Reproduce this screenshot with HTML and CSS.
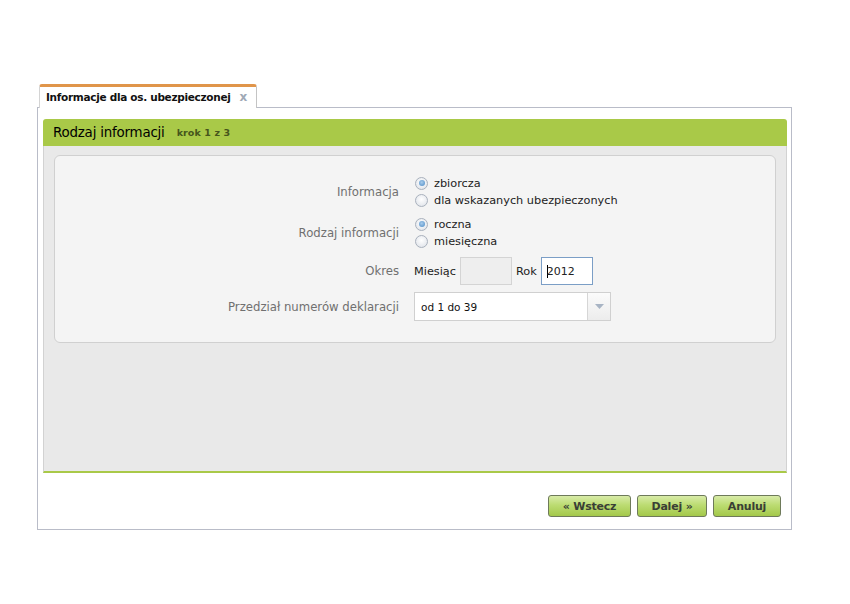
FILE: index.html
```html
<!DOCTYPE html>
<html lang="pl">
<head>
<meta charset="utf-8">
<title>Informacje dla os. ubezpieczonej</title>
<link rel="stylesheet" href="styles.css">
</head>
<body>
<div class="window">
  <div class="tabs">
    <div class="tab"><span class="tab-title">Informacje dla os. ubezpieczonej</span><span class="tab-close">x</span></div>
  </div>
  <div class="panel">
    <div class="section">
      <div class="section-head"><span class="section-title">Rodzaj informacji</span><span class="section-step">krok 1 z 3</span></div>
      <div class="section-body">
        <div class="form">
          <div class="row row-radio">
            <div class="label">Informacja</div>
            <div class="controls">
              <div class="radio-line"><span class="radio checked"></span><span>zbiorcza</span></div>
              <div class="radio-line"><span class="radio"></span><span>dla wskazanych ubezpieczonych</span></div>
            </div>
          </div>
          <div class="row row-radio">
            <div class="label">Rodzaj informacji</div>
            <div class="controls">
              <div class="radio-line"><span class="radio checked"></span><span>roczna</span></div>
              <div class="radio-line"><span class="radio"></span><span>miesięczna</span></div>
            </div>
          </div>
          <div class="row row-okres">
            <div class="label">Okres</div>
            <div class="controls inline">
              <span class="field-text">Miesiąc</span>
              <span class="input disabled"></span>
              <span class="field-text">Rok</span>
              <span class="input active"><span class="caret"></span>2012</span>
            </div>
          </div>
          <div class="row row-select">
            <div class="label">Przedział numerów deklaracji</div>
            <div class="controls">
              <div class="select"><span class="select-value">od 1 do 39</span><span class="select-btn"><svg width="9" height="5" viewBox="0 0 9 5"><path d="M0 0h9L4.5 5z" fill="#a8b4c4"/></svg></span></div>
            </div>
          </div>
        </div>
      </div>
    </div>
    <div class="buttons">
      <button class="btn btn-back">« Wstecz</button>
      <button class="btn btn-next">Dalej »</button>
      <button class="btn btn-cancel">Anuluj</button>
    </div>
  </div>
</div>
</body>
</html>
```

FILE: styles.css
```css
html, body {
  margin: 0;
  padding: 0;
  background: #ffffff;
}
body {
  font-family: "DejaVu Sans", Verdana, sans-serif;
  font-size: 11px;
  color: #222;
}
.window {
  margin: 84px 0 0 37px;
  width: 755px;
}
.tabs {
  display: flex;
  height: 23px;
  padding-left: 2px;
}
.tab {
  position: relative;
  z-index: 1;
  box-sizing: border-box;
  width: 218px;
  height: 24px;
  border-top: 3px solid #e0954a;
  border-left: 1px solid #d4d4d4;
  border-right: 1px solid #c4c4c4;
  background: #fff;
  border-radius: 3px 3px 0 0;
  display: flex;
  align-items: center;
  padding: 0 0 2px 6px;
}
.tab-title {
  font-weight: bold;
  font-size: 10.5px;
  letter-spacing: -0.3px;
  color: #111;
}
.tab-close {
  margin-left: 9px;
  font-weight: bold;
  font-size: 12px;
  color: #a0a9b6;
}
.panel {
  box-sizing: border-box;
  height: 423px;
  border: 1px solid #b9bcc8;
  padding: 11px 4px 0 5px;
}
.section-head {
  height: 27px;
  background: #a9c948;
  border-radius: 3px 3px 0 0;
  display: flex;
  align-items: center;
  padding-left: 10px;
}
.section-title {
  font-size: 13.4px;
  letter-spacing: -0.2px;
  color: #000;
}
.section-step {
  margin-left: 12px;
  font-size: 9.5px;
  font-weight: bold;
  color: #46551c;
  letter-spacing: 0.1px;
}
.section-body {
  box-sizing: border-box;
  height: 327px;
  background: #e9e9e9;
  border-left: 1px solid #d2d2d2;
  border-right: 1px solid #d2d2d2;
  border-bottom: 2px solid #a9c948;
  padding: 9px 10px 0 10px;
}
.form {
  box-sizing: border-box;
  height: 188px;
  background: #f4f4f4;
  border: 1px solid #d0d0d0;
  border-radius: 6px;
  padding-top: 18px;
}
.row {
  display: flex;
  align-items: center;
}
.label {
  width: 344px;
  text-align: right;
  color: #707070;
  font-size: 11.7px;
}
.controls {
  margin-left: 16px;
  color: #222;
  font-size: 11.3px;
}
.row-radio {
  height: 35px;
  margin-bottom: 6px;
}
.row-radio + .row-radio {
  margin-bottom: 0;
}
.radio-line {
  display: flex;
  align-items: center;
  height: 17px;
}
.radio-line span:last-child {
  margin-left: 6px;
}
.radio {
  box-sizing: border-box;
  width: 13px;
  height: 13px;
  border-radius: 50%;
  border: 1px solid #a9b1bd;
  background: radial-gradient(circle at 50% 40%, #ffffff 0%, #e6e9ee 70%, #d6dbe2 100%);
  display: inline-block;
  position: relative;
}
.radio.checked::after {
  content: "";
  position: absolute;
  left: 2.5px;
  top: 2.5px;
  width: 6px;
  height: 6px;
  border-radius: 50%;
  background: radial-gradient(circle at 45% 40%, #a8ccec 0%, #5d97cc 80%);
}
.row-okres {
  height: 28px;
  margin-top: 7px;
}
.inline {
  display: flex;
  align-items: center;
  margin-left: 15px;
}
.field-text {
  color: #222;
}
.input {
  box-sizing: border-box;
  display: inline-flex;
  align-items: center;
  width: 52px;
  height: 28px;
  margin: 0 4px;
  font-size: 11px;
}
.input.disabled {
  background: #eeeeee;
  border: 1px solid #d4d4d4;
}
.input.active {
  background: #fff;
  border: 1px solid #7b9ec6;
  padding-left: 5px;
}
.caret {
  display: inline-block;
  width: 1px;
  height: 13px;
  background: #000;
  margin-right: -1px;
}
.row-select {
  height: 29px;
  margin-top: 7px;
}
.select {
  box-sizing: border-box;
  display: flex;
  width: 197px;
  height: 29px;
  margin-left: -1px;
  background: #fff;
  border: 1px solid #d0d0d0;
}
.select-value {
  flex: 1;
  display: flex;
  align-items: center;
  padding-left: 6px;
  font-size: 10.5px;
  color: #111;
}
.select-btn {
  width: 22px;
  border-left: 1px solid #d6d6d6;
  background: linear-gradient(#fbfbfb, #ececec);
  display: flex;
  align-items: center;
  justify-content: center;
}
.buttons {
  display: flex;
  justify-content: flex-end;
  gap: 6px;
  padding: 22px 6px 0 0;
}
.btn {
  box-sizing: border-box;
  height: 22px;
  padding: 0;
  border: 1px solid #6e7a5a;
  border-radius: 3px;
  background: linear-gradient(#d8eba8 0%, #bcdc72 45%, #a3c84a 100%);
  font-family: "DejaVu Sans", Verdana, sans-serif;
  font-weight: bold;
  font-size: 11px;
  letter-spacing: -0.2px;
  color: #3a3f36;
  text-align: center;
}
.btn-back { width: 83px; }
.btn-next { width: 70px; }
.btn-cancel { width: 68px; }
```
